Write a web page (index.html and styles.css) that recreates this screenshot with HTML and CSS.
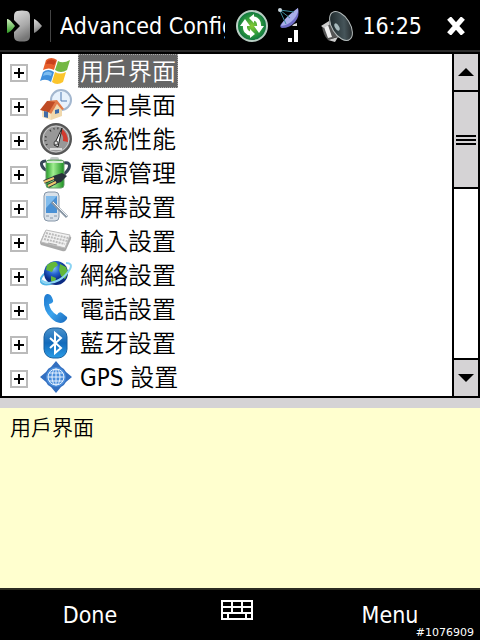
FILE: index.html
```html
<!DOCTYPE html>
<html lang="zh-Hant">
<head>
    <meta charset="UTF-8">
    <meta name="viewport" content="width=device-width, initial-scale=1.0">
    <title>Advanced Config</title>
    <link rel="stylesheet" href="styles.css">
</head>
<body>
    <header class="top-bar">
        <button class="start" aria-label="Start">
            <svg width="36" height="32" viewBox="0 0 36 32">
                <defs>
                    <linearGradient id="silver" x1="0" y1="0" x2="0.3" y2="1">
                        <stop offset="0" stop-color="#ddd"/>
                        <stop offset="0.6" stop-color="#aaa"/>
                        <stop offset="1" stop-color="#777"/>
                    </linearGradient>
                    <linearGradient id="green" x1="0" y1="0" x2="0" y2="1">
                        <stop offset="0" stop-color="#d0efc0"/>
                        <stop offset="1" stop-color="#2f9a22"/>
                    </linearGradient>
                </defs>
                <path d="M11 1Q16 0 21 1Q24 2 24 6V26Q24 30 21 31Q16 32 11 31Q8 30 8 26V22L14 16L8 10V6Q8 2 11 1Z" fill="url(#silver)"/>
                <path d="M1 9Q3 8 9 16Q4 23 1 23Z" fill="url(#green)"/>
                <path d="M28 9Q31 10 36 16Q31 22 28 23Z" fill="url(#silver)"/>
            </svg>
        </button>
        <h1>Advanced Config</h1>
        <button class="sync" aria-label="Sync">
            <svg width="32" height="34" viewBox="0 0 32 34">
                <defs>
                    <radialGradient id="syncFill">
                        <stop offset="0" stop-color="#8c3"/>
                        <stop offset="0.6" stop-color="#2c9a3c"/>
                        <stop offset="1" stop-color="#0b7040"/>
                    </radialGradient>
                </defs>
                <circle cx="16" cy="17" r="15" fill="url(#syncFill)" stroke="#b9cfc4" stroke-width="2"/>
                <path d="M16 25Q8 24 9 16" fill="none" stroke="#fff" stroke-width="4"/>
                <path d="M4 17L9 10L14 17ZM14 20V29L19 25Z" fill="#fff"/>
                <path d="M16 9Q24 10 23 18" fill="none" stroke="#fff" stroke-width="4"/>
                <path d="M28 17L23 24L18 17ZM18 5V14L13 9Z" fill="#fff"/>
            </svg>
        </button>
        <button class="signal" aria-label="Signal">
            <svg width="22" height="36" viewBox="0 0 22 36">
                <path d="M20 0Q22 8 17 14Q12 20 4 20Q1 19 3 16Z" fill="#6f6cc4"/>
                <path d="M20 0Q17 2 10 8Q4 14 3 18Q11 17 16 11Q21 5 20 0Z" fill="#a9aeea"/>
                <path d="M2 2L16 4M2 3L8 16M3 3L12 10" stroke="#3c8a9a" fill="none"/>
                <circle cx="2" cy="2" r="2" fill="#c8d4dc"/>
                <path d="M16 16L19 15V18H14Z" fill="#ddd"/>
                <path d="M10 30H14V34H10ZM16 22H20V34H16Z" fill="#fff"/>
            </svg>
        </button>
        <button class="volume" aria-label="Volume">
            <svg width="34" height="34" viewBox="0 0 34 34">
                <defs>
                    <linearGradient id="cone" x1="0" y1="0" x2="1" y2="1">
                        <stop offset="0" stop-color="#111a1c"/>
                        <stop offset="0.6" stop-color="#46555a"/>
                        <stop offset="1" stop-color="#151515"/>
                    </linearGradient>
                </defs>
                <path d="M2 17L10 13L17 28L8 31Q3 26 2 17Z" fill="#555"/>
                <path d="M4 18L8 16L12 28L8 29Z" fill="#eee"/>
                <path d="M1 17L9 12L12 14L4 19ZM8 31L18 28L15 33Z" fill="#ccc"/>
                <path d="M11 3L9 14L17 28L29 32Z" fill="#888"/>
                <ellipse cx="21" cy="17" rx="9" ry="16" transform="rotate(-32 21 17)" fill="url(#cone)" stroke="#b5bcbc"/>
                <ellipse cx="17" cy="18" rx="2" ry="4" transform="rotate(-30 17 18)" fill="#a8babd"/>
            </svg>
        </button>
        <time>16:25</time>
        <button class="close" aria-label="Close">
            <svg width="20" height="18" viewBox="0 0 20 18">
                <path d="M3 1L17 17M17 1L3 17" stroke="#fff" stroke-width="5"/>
            </svg>
        </button>
    </header>

    <main>
        <section class="tree-box">
            <ul class="tree">
                <li>
                    <button class="expand" aria-label="Expand"></button>
                    <svg width="32" height="32" viewBox="0 0 32 32">
                        <path d="M6 5Q11 1 17 5L14 15Q9 12 3 15Z" fill="#e8602c"/>
                        <path d="M18 6Q23 9 30 5L27 15Q21 19 15 15Z" fill="#74b843"/>
                        <path d="M3 17Q8 13 14 17L11 27Q6 23 0 26Z" fill="#3f8fdc"/>
                        <path d="M15 17Q20 20 26 17L23 27Q17 31 12 27Z" fill="#fbc52c"/>
                        <path d="M7 6Q11 3 16 6L14 10Q10 8 6 9Z" fill="#c8401c"/>
                        <path d="M4 18Q8 15 12 18L11 21Q7 19 3 21Z" fill="#7cbcf0"/>
                    </svg>
                    <a class="selected" href="#">用戶界面</a>
                </li>
                <li>
                    <button class="expand" aria-label="Expand"></button>
                    <svg width="32" height="32" viewBox="0 0 32 32">
                        <circle cx="21" cy="11" r="10" fill="#e8f2fc" stroke="#a3b7cf" stroke-width="2"/>
                        <path d="M21 3V12H27" fill="none" stroke="#4d79b0"/>
                        <path d="M2 20L11 23V31L2 28Z" fill="#f6e3bd"/>
                        <path d="M11 24L17 15L22 20V27L11 31Z" fill="#f0d8ac"/>
                        <path d="M7 12L17 12L11 24L0 21Z" fill="#bf4b24"/>
                        <path d="M7 12L17 11L24 20L22 21L17 15L11 25L9 23L15 13Z" fill="#e27b48"/>
                        <path d="M4 22L8 23V29L4 28Z" fill="#416da8"/>
                        <path d="M15 21L19 20V24L15 25Z" fill="#3d6aaa"/>
                    </svg>
                    <a href="#">今日桌面</a>
                </li>
                <li>
                    <button class="expand" aria-label="Expand"></button>
                    <svg width="32" height="32" viewBox="0 0 32 32">
                        <circle cx="16" cy="16" r="15" fill="#777" stroke="#555" stroke-width="2"/>
                        <circle cx="16" cy="16" r="13" fill="#989898" stroke="#ccc"/>
                        <path d="M22 6Q28 10 28 19L23 18Q24 12 20 10Z" fill="#d23b30"/>
                        <path d="M7 22Q4 17 7 11M10 8Q15 4 20 6" fill="none" stroke="#333" stroke-width="2" stroke-dasharray="1 3"/>
                        <path d="M14 22L22 5L18 24Z" fill="#fff" stroke="#222"/>
                        <circle cx="16" cy="20" r="2" fill="#ddd" stroke="#444"/>
                        <path d="M10 26H22" stroke="#ddd" stroke-width="2"/>
                    </svg>
                    <a href="#">系統性能</a>
                </li>
                <li>
                    <button class="expand" aria-label="Expand"></button>
                    <svg width="32" height="32" viewBox="0 0 32 32">
                        <defs>
                            <linearGradient id="battery">
                                <stop offset="0" stop-color="#259b28"/>
                                <stop offset="0.4" stop-color="#a0ee91"/>
                                <stop offset="1" stop-color="#1a8f21"/>
                            </linearGradient>
                        </defs>
                        <path d="M6 4Q0 4 2 9Q4 13 7 13M24 6Q31 5 29 11Q28 14 23 18" fill="none" stroke="#384759" stroke-width="3"/>
                        <rect x="10" y="0" width="9" height="4" rx="2" fill="#c5ccc8"/>
                        <rect x="6" y="3" width="18" height="28" rx="3" fill="url(#battery)" stroke="#6d9b70"/>
                        <path d="M7 5H23" stroke="#d3e8d3" stroke-width="2"/>
                        <path d="M13 19L22 16L27 19L21 25L15 27Z" fill="#27313a"/>
                        <path d="M14 21L4 25M16 25L8 29" stroke="#27313a" stroke-width="4"/>
                        <path d="M14 21L4 25M16 25L8 29" stroke="#efc870" stroke-width="2"/>
                    </svg>
                    <a href="#">電源管理</a>
                </li>
                <li>
                    <button class="expand" aria-label="Expand"></button>
                    <svg width="32" height="32" viewBox="0 0 32 32">
                        <rect x="4" y="1" width="15" height="29" rx="4" fill="#d9e1e9" stroke="#8696a8"/>
                        <rect x="6" y="5" width="11" height="17" fill="#4a91d5"/>
                        <path d="M6 5H17L6 17Z" fill="#82bcec"/>
                        <path d="M6 25H9M14 25H17M10 27H13" stroke="#8796a8"/>
                        <path d="M12 11L27 26" stroke="#8997a5" stroke-width="3"/>
                        <path d="M13 11L27 25" stroke="#f1f4f7"/>
                    </svg>
                    <a href="#">屏幕設置</a>
                </li>
                <li>
                    <button class="expand" aria-label="Expand"></button>
                    <svg width="32" height="32" viewBox="0 0 32 32">
                        <path d="M6 6L30 11Q32 12 31 14L26 25Q25 27 22 26L1 20Q0 19 0 17L4 8Q5 6 6 6Z" fill="#aaa"/>
                        <path d="M6 5L30 10L25 23L1 17Z" fill="#f2f2f2" stroke="#bbb"/>
                        <path d="M6 8L28 13M5 11L27 16M4 14L25 19" stroke="#bbb" stroke-width="2" stroke-dasharray="2 1"/>
                        <path d="M8 18L17 20" stroke="#aaa"/>
                    </svg>
                    <a href="#">輸入設置</a>
                </li>
                <li>
                    <button class="expand" aria-label="Expand"></button>
                    <svg width="32" height="32" viewBox="0 0 32 32">
                        <defs>
                            <radialGradient id="globe" cx="0.4" cy="0.3">
                                <stop offset="0" stop-color="#8cc8fa"/>
                                <stop offset="0.5" stop-color="#2564cf"/>
                                <stop offset="1" stop-color="#0b2b83"/>
                            </radialGradient>
                        </defs>
                        <path d="M8 12Q-1 18 1 23Q4 28 16 23" fill="none" stroke="#52b6e6" stroke-width="2"/>
                        <circle cx="16" cy="14" r="12" fill="url(#globe)"/>
                        <path d="M7 6Q12 2 16 3L18 6L14 9L12 13L6 11ZM20 5L26 8L28 14L25 20L21 17L19 11ZM11 17L16 19L15 24L11 22Z" fill="#63b83a"/>
                        <path d="M1 21Q8 27 19 21Q26 17 30 10Q33 4 26 4" fill="none" stroke="#8ad3f3" stroke-width="2"/>
                    </svg>
                    <a href="#">網絡設置</a>
                </li>
                <li>
                    <button class="expand" aria-label="Expand"></button>
                    <svg width="32" height="32" viewBox="0 0 32 32">
                        <defs>
                            <linearGradient id="phone" x1="0" y1="0" x2="1" y2="1">
                                <stop offset="0" stop-color="#1b75cc"/>
                                <stop offset="0.5" stop-color="#3ca5ee"/>
                                <stop offset="1" stop-color="#1869bd"/>
                            </linearGradient>
                        </defs>
                        <path d="M7 1Q11 0 13 7Q14 10 9 11Q10 18 17 22Q19 18 22 20L27 24Q28 26 24 29Q18 32 11 25Q3 17 4 7Q4 2 7 1Z" fill="url(#phone)"/>
                    </svg>
                    <a href="#">電話設置</a>
                </li>
                <li>
                    <button class="expand" aria-label="Expand"></button>
                    <svg width="32" height="32" viewBox="0 0 32 32">
                        <defs>
                            <linearGradient id="bt" x1="0" y1="0" x2="0" y2="1">
                                <stop offset="0" stop-color="#4c93cc"/>
                                <stop offset="0.5" stop-color="#126abb"/>
                                <stop offset="1" stop-color="#2a9ce6"/>
                            </linearGradient>
                        </defs>
                        <rect x="4" y="1" width="23" height="30" rx="9" fill="url(#bt)" stroke="#185f9e"/>
                        <path d="M10 11L21 21L15 26V6L21 11L10 21" fill="none" stroke="#fff" stroke-width="2"/>
                    </svg>
                    <a href="#">藍牙設置</a>
                </li>
                <li>
                    <button class="expand" aria-label="Expand"></button>
                    <svg width="32" height="32" viewBox="0 0 32 32">
                        <path d="M16 0L21 6Q25 8 26 11L32 16L26 21Q24 25 21 26L16 32L11 26Q7 24 6 21L0 16L6 11Q8 7 11 6Z" fill="#336fc0"/>
                        <circle cx="16" cy="16" r="10" fill="#4b8edb"/>
                        <g fill="none" stroke="#e6f1ff">
                            <circle cx="16" cy="16" r="8"/>
                            <ellipse cx="16" cy="16" rx="4" ry="8"/>
                            <path d="M16 8V24M8 16H24M9 12H23M9 20H23"/>
                        </g>
                    </svg>
                    <a href="#">GPS 設置</a>
                </li>
            </ul>
            <div class="scrollbar">
                <button class="arrow" aria-label="Scroll up">
                    <svg width="16" height="8" viewBox="0 0 16 8"><path d="M8 0L16 8H0Z"/></svg>
                </button>
                <div class="thumb"><span class="grip"></span></div>
                <div class="track"></div>
                <button class="arrow" aria-label="Scroll down">
                    <svg width="16" height="8" viewBox="0 0 16 8"><path d="M0 0H16L8 8Z"/></svg>
                </button>
            </div>
        </section>
        <section class="description">用戶界面</section>
    </main>

    <footer class="menu-bar">
        <button>Done</button>
        <button class="keyboard" aria-label="Keyboard">
            <svg width="32" height="20" viewBox="0 0 32 20">
                <path d="M1 1H31V19H1ZM1 7H31M1 13H31M11 1V7M21 1V7M11 7V13M21 7V13M7 13V19M25 13V19" fill="none" stroke="#fff" stroke-width="2"/>
            </svg>
        </button>
        <button>Menu</button>
        <small class="photo-id">#1076909</small>
    </footer>
</body>
</html>
```
FILE: styles.css
```css
* {
    box-sizing: border-box;
}
body {
    display: flex;
    flex-direction: column;
    min-height: 100vh;
    margin: 0;
    background-color: #000;
    color: #000;
    font-family: "DejaVu Sans Condensed", "Noto Sans CJK TC", sans-serif;
    font-size: 23px;
}
button {
    padding: 0;
    border: none;
    background: none;
    color: inherit;
    font: inherit;
    cursor: pointer;
}
svg {
    display: block;
    flex: none;
}

/* top bar */
.top-bar {
    display: flex;
    align-items: center;
    height: 52px;
    padding: 2px 14px 0 6px;
    border-bottom: 2px solid #2c2c2c;
    color: #fff;
}
.start {
    padding-right: 8px;
    border-right: 1px solid #444;
}
h1 {
    flex: 1;
    min-width: 0;
    margin: 0 11px 0 9px;
    overflow: hidden;
    font-size: 23px;
    font-weight: normal;
    line-height: 32px;
    white-space: nowrap;
}
.sync {
    margin-right: 10px;
}
.signal {
    margin-right: 20px;
}
.volume {
    margin-right: 8px;
}
.close {
    margin-left: 24px;
}

/* tree */
main {
    display: flex;
    flex: 1;
    flex-direction: column;
}
.tree-box {
    display: flex;
    border: 2px solid #000;
    background-color: #fff;
}
.tree {
    flex: 1;
    margin: 0;
    padding: 0 0 2px;
    list-style: none;
}
.tree li {
    display: flex;
    align-items: center;
    height: 34px;
    padding-left: 8px;
}
.tree a {
    height: 34px;
    margin-left: 6px;
    padding: 0 2px;
    color: #000;
    font-size: 24px;
    font-weight: 350;
    line-height: 36px;
    text-decoration: none;
}
.tree a.selected {
    outline: 1px dotted #aaa;
    outline-offset: -1px;
    background-color: #666;
    color: #fff;
}
.expand {
    width: 18px;
    height: 18px;
    margin: 4px 12px 0 0;
    border: 2px solid #bbb;
    background:
        linear-gradient(#000, #000) center / 10px 2px no-repeat,
        linear-gradient(#000, #000) center / 2px 10px no-repeat;
}

/* scrollbar */
.scrollbar {
    display: flex;
    flex-direction: column;
    width: 26px;
    border-left: 2px solid #000;
}
.arrow,
.thumb {
    display: flex;
    align-items: center;
    justify-content: center;
    background-color: #d5d3d5;
}
.arrow {
    height: 36px;
}
.thumb {
    height: 99px;
    border: solid #000;
    border-width: 2px 0;
}
.grip {
    width: 20px;
    height: 10px;
    background: repeating-linear-gradient(#000 0 2px, transparent 2px 4px);
}
.track {
    flex: 1;
    border-bottom: 2px solid #000;
}

.description {
    flex: 1;
    padding: 4px 10px;
    border-top: 10px solid #d5d3d5;
    background-color: #ffffcf;
    font-size: 21px;
    font-weight: 350;
    line-height: 32px;
}

/* bottom bar */
.menu-bar {
    position: relative;
    display: grid;
    grid-template-columns: 3fr 2fr 3fr;
    height: 52px;
    border-top: 2px solid #2c2c22;
    color: #fff;
}
.keyboard {
    display: flex;
    justify-content: center;
    padding: 10px 6px 0 0;
}
.photo-id {
    position: absolute;
    right: 6px;
    bottom: 1px;
    font-family: "DejaVu Sans", sans-serif;
    font-size: 11px;
}
```
